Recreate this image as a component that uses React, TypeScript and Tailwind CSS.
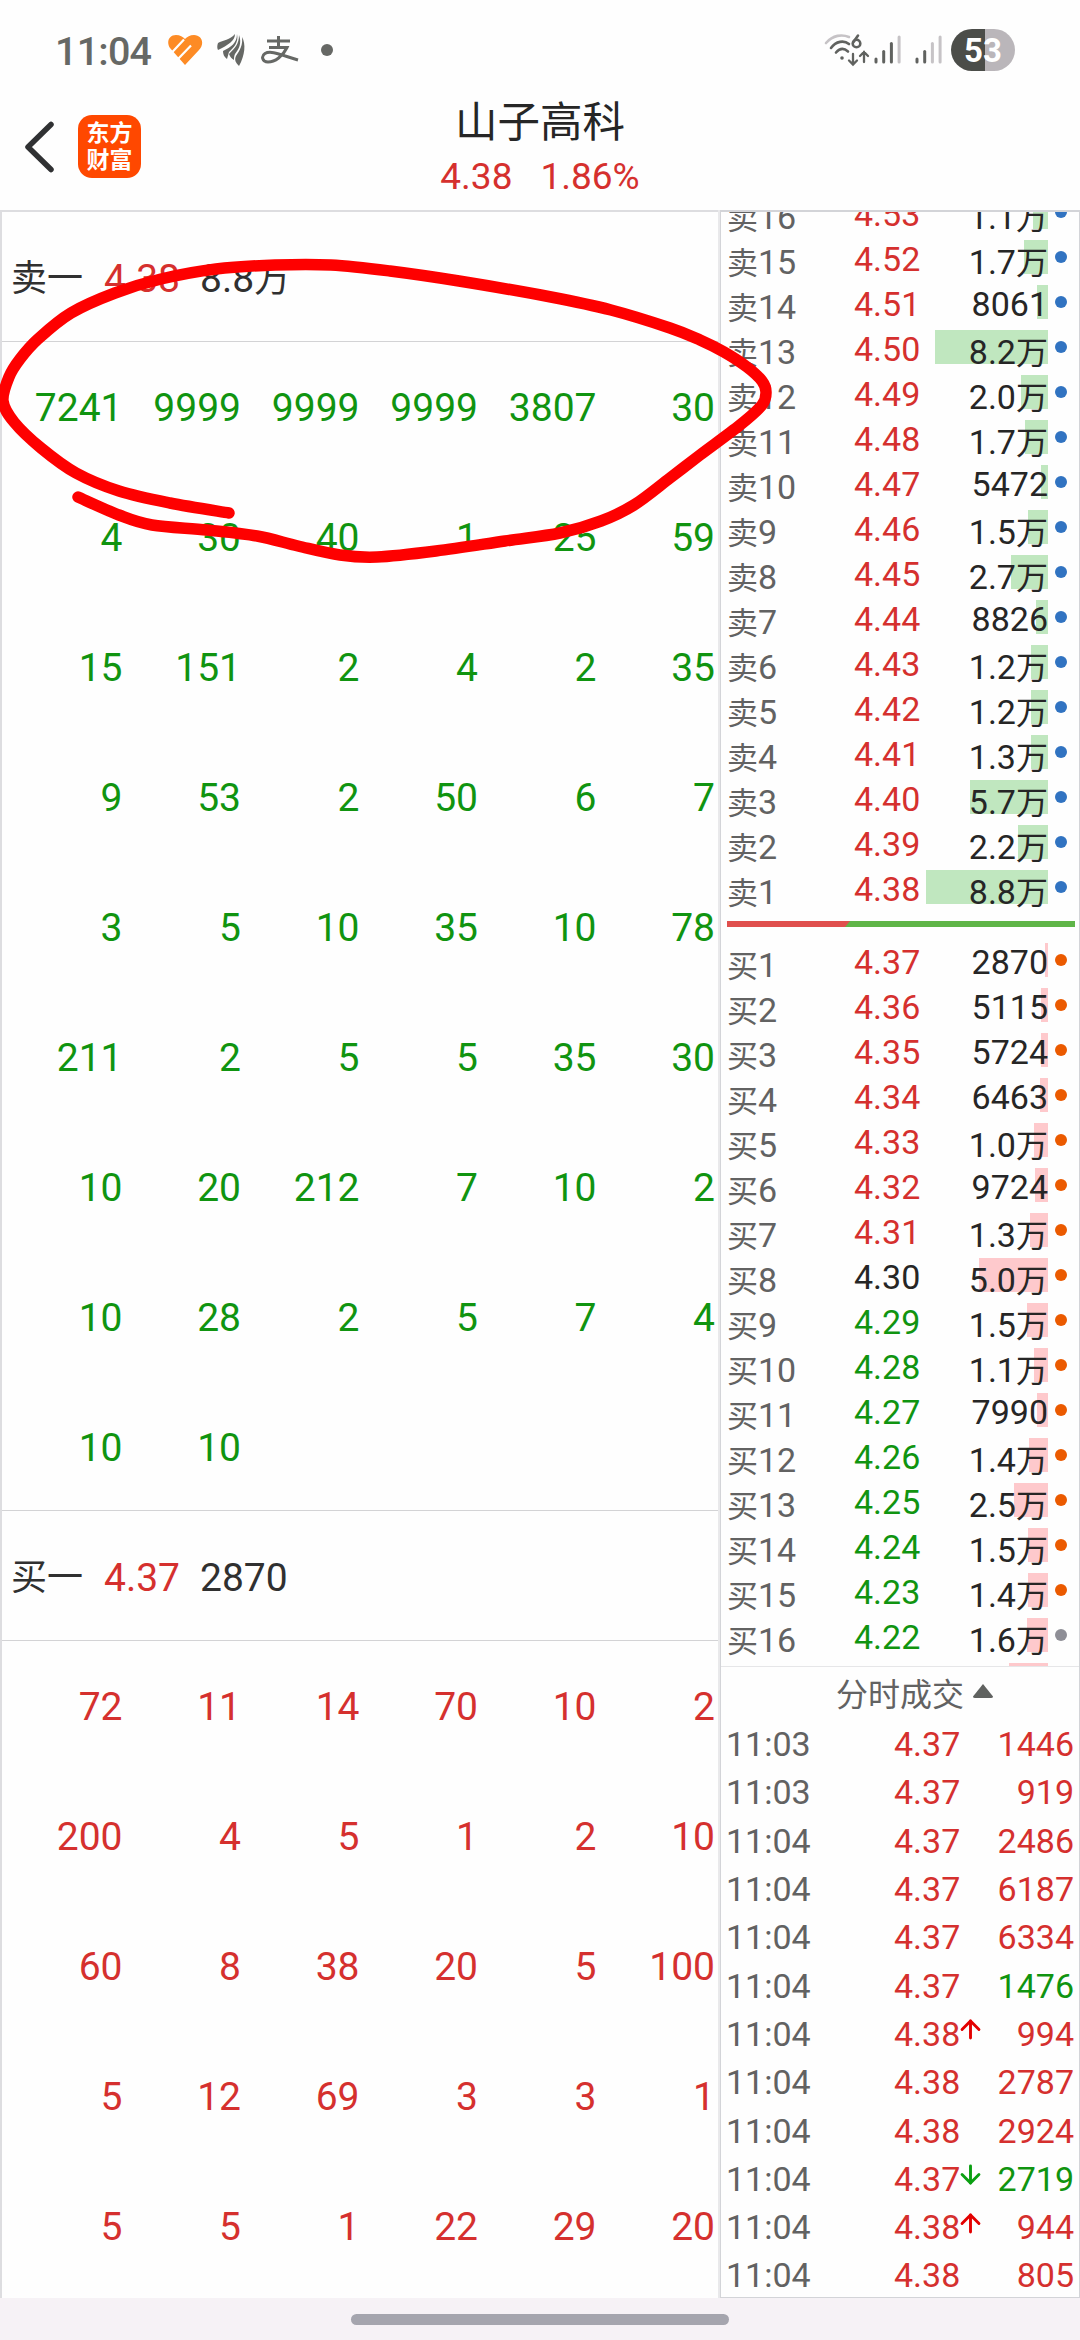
import clsx from "clsx";
import { ArrowDown, ArrowUp } from "lucide-react";

const RED = "text-[#d5302e]";
const GREEN = "text-[#109410]";
const DARK = "text-[#262626]";

type Level = [volume: string, bar: number];

// listed from 卖16 down to 卖1
const sells: Level[] = [
  ["1.1万", 15],
  ["1.7万", 24],
  ["8061", 11],
  ["8.2万", 113],
  ["2.0万", 27],
  ["1.7万", 23],
  ["5472", 7],
  ["1.5万", 20],
  ["2.7万", 37],
  ["8826", 12],
  ["1.2万", 17],
  ["1.2万", 17],
  ["1.3万", 17],
  ["5.7万", 78],
  ["2.2万", 30],
  ["8.8万", 122],
];

const buys: Level[] = [
  ["2870", 3],
  ["5115", 7],
  ["5724", 7],
  ["6463", 8],
  ["1.0万", 14],
  ["9724", 13],
  ["1.3万", 18],
  ["5.0万", 69],
  ["1.5万", 21],
  ["1.1万", 14],
  ["7990", 11],
  ["1.4万", 19],
  ["2.5万", 34],
  ["1.5万", 20],
  ["1.4万", 20],
  ["1.6万", 21],
];

const sellQueue = [
  [7241, 9999, 9999, 9999, 3807, 30],
  [4, 30, 40, 1, 25, 59],
  [15, 151, 2, 4, 2, 35],
  [9, 53, 2, 50, 6, 7],
  [3, 5, 10, 35, 10, 78],
  [211, 2, 5, 5, 35, 30],
  [10, 20, 212, 7, 10, 2],
  [10, 28, 2, 5, 7, 4],
  [10, 10],
];

const buyQueue = [
  [72, 11, 14, 70, 10, 2],
  [200, 4, 5, 1, 2, 10],
  [60, 8, 38, 20, 5, 100],
  [5, 12, 69, 3, 3, 1],
  [5, 5, 1, 22, 29, 20],
];

const trades = [
  { time: "11:03", price: "4.37", volume: 1446, up: true },
  { time: "11:03", price: "4.37", volume: 919, up: true },
  { time: "11:04", price: "4.37", volume: 2486, up: true },
  { time: "11:04", price: "4.37", volume: 6187, up: true },
  { time: "11:04", price: "4.37", volume: 6334, up: true },
  { time: "11:04", price: "4.37", volume: 1476, up: false },
  { time: "11:04", price: "4.38", volume: 994, up: true, arrow: "up" },
  { time: "11:04", price: "4.38", volume: 2787, up: true },
  { time: "11:04", price: "4.38", volume: 2924, up: true },
  { time: "11:04", price: "4.37", volume: 2719, up: false, arrow: "down" },
  { time: "11:04", price: "4.38", volume: 944, up: true, arrow: "up" },
  { time: "11:04", price: "4.38", volume: 805, up: true },
];

// hand drawn loop around the first queue row
const strokePoints = [
  [229, 513], [170, 503], [119, 491], [76, 473], [41, 448], [14, 422], [3, 401],
  [9, 377], [20, 359], [38, 339], [71, 313], [115, 293], [161, 279], [216, 269],
  [275, 265], [331, 265], [390, 271], [459, 281], [551, 297], [611, 310],
  [670, 328], [700, 340], [724, 352], [747, 367], [762, 381], [766, 392],
  [762, 405], [740, 425], [700, 455], [670, 478], [634, 505], [601, 521],
  [560, 533], [505, 541], [436, 551], [377, 557], [340, 555], [298, 546],
  [257, 536], [207, 530], [152, 525], [119, 515], [78, 497],
];

const smoothPath = (pts: number[][]) => {
  let d = `M${pts[0][0]} ${pts[0][1]}`;
  for (let i = 0; i < pts.length - 1; i++) {
    const [p0, p1, p2, p3] = [pts[i - 1] ?? pts[i], pts[i], pts[i + 1], pts[i + 2] ?? pts[i + 1]];
    d += `C${p1[0] + (p2[0] - p0[0]) / 6} ${p1[1] + (p2[1] - p0[1]) / 6} ${p2[0] - (p3[0] - p1[0]) / 6} ${p2[1] - (p3[1] - p1[1]) / 6} ${p2[0]} ${p2[1]}`;
  }
  return d;
};

const Signal = ({ level }: { level: number }) => (
  <svg width="27" height="30" viewBox="0 0 27 30" strokeWidth="3" strokeLinecap="round">
    {[24, 16.5, 8.5, 2].map((top, i) => (
      <path
        key={top}
        d={`M${2 + i * 7.7} ${top}V27`}
        stroke={i < level ? "#60625f" : "#c6c3c6"}
      />
    ))}
  </svg>
);

const StatusBar = () => (
  <div className="flex h-[100px] items-center justify-between pl-[55px] pr-[65px]">
    <div className="flex items-center text-[#666865]">
      <span className="w-[112px] pt-[3px] text-[39.5px] font-medium leading-none tracking-[-0.8px]">
        11:04
      </span>
      <svg width="36" height="32" viewBox="0 0 36 32">
        <path
          fill="#fd8b25"
          d="M3 14C-1 8 2 1 9 1c4 0 7 2 9 4 2-2 5-4 9-4 8 0 11 9 5 15L18 31 3 14Z"
        />
        <path d="M3 20.500 17 5.500M11 25 24 11.500" fill="none" stroke="#fff" strokeWidth="2.2" />
      </svg>
      <svg className="ml-[14px]" width="30" height="34" viewBox="0 0 30 34" fill="currentColor">
        <path d="M1 10C6 7 13 7 18 1c0 7-7 11-17 16-1-2-1-4 0-7Z" />
        <path d="M20 1c2 9-4 14-8 18l-2 7C7 24 6 21 6 18 14 14 20 10 20 1Z" />
        <path d="M22 2c3 8 0 14-4 19-1 2-1 4-1 6-2-1-4-3-5-6 6-6 10-10 10-19Z" />
        <path d="M25 4c4 7 3 18-3 29-3-3-5-6-3-10C23 17 26 12 25 4Z" />
      </svg>
      <svg
        className="ml-[14px]"
        width="38"
        height="30"
        viewBox="0 0 38 30"
        fill="none"
        stroke="currentColor"
        strokeWidth="3"
      >
        <path d="M6 6H29M17.500 1V12.500M8 12.500H26C22 21 14 27 7 27 1 27 0 21 4 18.500 10 15 20 20 37 25" />
      </svg>
      <span className="ml-[22px] size-3 rounded-full bg-current" />
    </div>
    <div className="flex items-center">
      <svg
        width="46"
        height="34"
        viewBox="0 0 46 34"
        fill="none"
        stroke="#60625f"
        strokeWidth="2.6"
        strokeLinecap="round"
      >
        <path d="M2 10C9 2 18 1 25 4" stroke="#c6c3c6" />
        <path d="M7 15C12 8 20 7 25 11M12 19.500C16 15 20 15 24 18.500" />
        <circle cx="18" cy="25" r="1.8" fill="#60625f" stroke="none" />
        <path d="M34 2.500 29.500 9" />
        <circle cx="32.500" cy="10.500" r="3.800" />
        <path d="M29 21V31M25 27.500 29 31.500 33 27.500M40 29V19M36 23 40 19 44 23" strokeWidth="2.3" />
      </svg>
      <span className="ml-1 flex gap-[14px]">
        <Signal level={3} />
        <Signal level={2} />
      </span>
      <span className="ml-[9px] flex h-[42px] w-[64px] items-center justify-center rounded-full bg-[linear-gradient(90deg,#4b4d49_53%,#bab6ba_53%)] text-[33px] font-bold leading-none text-white">
        53
      </span>
    </div>
  </div>
);

const Header = () => (
  <div className="grid h-[110px] grid-cols-3">
    <div className="flex items-start gap-[22px] pl-[22px] pt-[15px]">
      <svg
        width="34"
        height="63"
        viewBox="0 0 34 63"
        fill="none"
        stroke="#303133"
        strokeWidth="5.500"
        strokeLinecap="round"
      >
        <path d="M29 9.500 6 32 29 54.500" strokeLinejoin="round" />
      </svg>
      <div className="flex size-[63px] flex-col items-center justify-center gap-1 rounded-[14px] bg-[#ff4800] text-[23px] font-bold leading-[23px] text-white">
        <span>东方</span>
        <span>财富</span>
      </div>
    </div>
    <div className="flex flex-col items-center pt-0.5">
      <h1 className="h-[54px] text-[42.5px] leading-[42px] text-[#262626]">山子高科</h1>
      <p className={clsx("flex gap-[28px] text-[37px] leading-[41px]", RED)}>
        <span>4.38</span>
        <span>1.86%</span>
      </p>
    </div>
  </div>
);

const Volume = ({ value, size }: { value: string; size: string }) => (
  <span>
    {value.replace("万", "")}
    {value.endsWith("万") && <span className={clsx("leading-none", size)}>万</span>}
  </span>
);

const QueueTitle = ({ label, price, volume }: { label: string; price: string; volume: string }) => (
  <div className="flex h-[130px] items-center border-b border-[#d3d3d5] pl-[9px] pt-[5px] text-[39px] leading-none text-[#303030]">
    <span className="w-[93px] text-[36px]">{label}</span>
    <span className={clsx("w-[96px]", RED)}>{price}</span>
    <Volume value={volume} size="text-[36px]" />
  </div>
);

const Queue = ({ rows, color }: { rows: number[][]; color: string }) => (
  <div className={clsx("w-[713px] pl-[2px] text-[39px] leading-[132px]", color)}>
    {rows.map((row, i) => (
      <div key={i} className="grid h-[130px] grid-cols-6 text-right">
        {row.map((n, j) => (
          <span key={j}>{n}</span>
        ))}
      </div>
    ))}
  </div>
);

interface LevelRowProps {
  side: string;
  index: number;
  price: number;
  level: Level;
}

const LevelRow = ({ side, index, price, level: [volume, bar] }: LevelRowProps) => {
  const color = price > 430 ? RED : price < 430 ? GREEN : DARK;
  const large = volume.endsWith("万");
  return (
    <div className="flex h-[45px] text-[34px]">
      <span className="w-[127px] leading-[45px] text-[#626262]">
        <span className="text-[31px] leading-none">{side}</span>
        {index}
      </span>
      <span className={clsx("w-[68px] leading-[39px]", color)}>{(price / 100).toFixed(2)}</span>
      <span
        className={clsx(
          "relative w-[126px] text-right",
          DARK,
          large ? "leading-[45px]" : "leading-[39px]"
        )}
      >
        <span
          className={clsx(
            "absolute right-0 top-0 h-[34px]",
            side === "卖" ? "bg-[#c0e7bf]" : "bg-[#fec9cc]"
          )}
          style={{ width: bar }}
        />
        <span className="relative">
          <Volume value={volume} size="text-[32px]" />
        </span>
      </span>
      <span
        className={clsx(
          "ml-[7px] mt-[11px] size-3 rounded-full",
          side === "卖" ? "bg-[#3173c1]" : index === 16 ? "bg-[#8e8e96]" : "bg-[#eb5a00]"
        )}
      />
    </div>
  );
};

const OrderBook = () => (
  <div className="h-[1455px] overflow-hidden border-b border-[#e6e6e8] pl-[6px]">
    <div className="-mt-[17px]">
      {sells.map((level, i) => (
        <LevelRow key={i} side="卖" index={16 - i} price={453 - i} level={level} />
      ))}
    </div>
    <svg className="mb-4 mt-1.5" width="348" height="6" viewBox="0 0 348 6">
      <path d="M0 0H348V6H0Z" fill="#5fb548" />
      <path d="M0 0H123L118 6H0Z" fill="#e04f4d" />
    </svg>
    {buys.map((level, i) => (
      <LevelRow key={i} side="买" index={i + 1} price={437 - i} level={level} />
    ))}
    <div className="ml-[282px] h-[34px] w-[39px] bg-[#fec9cc]" />
  </div>
);

const Trades = () => (
  <div className="pl-[5px] pr-[5px] text-[34px]">
    <div className="flex h-[53px] items-center justify-center gap-[9px] pl-[29px] pt-0.5 text-[32px] leading-none text-[#626262]">
      分时成交
      <svg className="-mt-2" width="20" height="14" viewBox="0 0 20 14" fill="#606260">
        <path d="M10 0 20 12.500Q20 14 18 14H2Q0 14 0 12.500Z" />
      </svg>
    </div>
    {trades.map((t, i) => (
      <div key={i} className="flex h-[48.3px] items-center leading-none">
        <span className="w-[168px] text-[#626262]">{t.time}</span>
        <span className={RED}>{t.price}</span>
        {t.arrow === "up" && (
          <ArrowUp className="-mt-2 -ml-1 size-[29px] text-[#e30000]" strokeWidth={2.4} />
        )}
        {t.arrow === "down" && (
          <ArrowDown className="-mt-2 -ml-1 size-[29px] text-[#0b9f12]" strokeWidth={2.4} />
        )}
        <span className={clsx("ml-auto", t.up ? RED : GREEN)}>{t.volume}</span>
      </div>
    ))}
  </div>
);

const App = () => {
  return (
    <div className="relative h-[2340px] w-[1080px] overflow-hidden bg-[#fefefe] font-['Roboto','Noto_Sans_CJK_SC',sans-serif]">
      <StatusBar />
      <Header />
      <div className="flex h-[2088px]">
        <div className="w-[718px] overflow-hidden border-l-2 border-t-2 border-[#dddde0]">
          <QueueTitle label="卖一" price="4.38" volume="8.8万" />
          <div className="h-[1169px] border-b border-[#d3d3d5]">
            <Queue rows={sellQueue} color={GREEN} />
          </div>
          <QueueTitle label="买一" price="4.37" volume="2870" />
          <Queue rows={buyQueue} color={RED} />
        </div>
        <div className="w-0.5 bg-[#e9e9eb]" />
        <div className="w-[360px] border border-t-2 border-[#d3d4d8]">
          <OrderBook />
          <Trades />
        </div>
      </div>
      <div className="flex h-[42px] justify-center bg-[#f6f2f6] pt-4">
        <div className="h-[11px] w-[378px] rounded-full bg-[#a5a5ae]" />
      </div>
      <svg
        className="absolute left-0 top-0"
        width="1080"
        height="600"
        fill="none"
        stroke="#fe0000"
        strokeWidth="11.500"
        strokeLinecap="round"
        strokeLinejoin="round"
      >
        <path d={smoothPath(strokePoints)} />
      </svg>
    </div>
  );
};

export default App;
